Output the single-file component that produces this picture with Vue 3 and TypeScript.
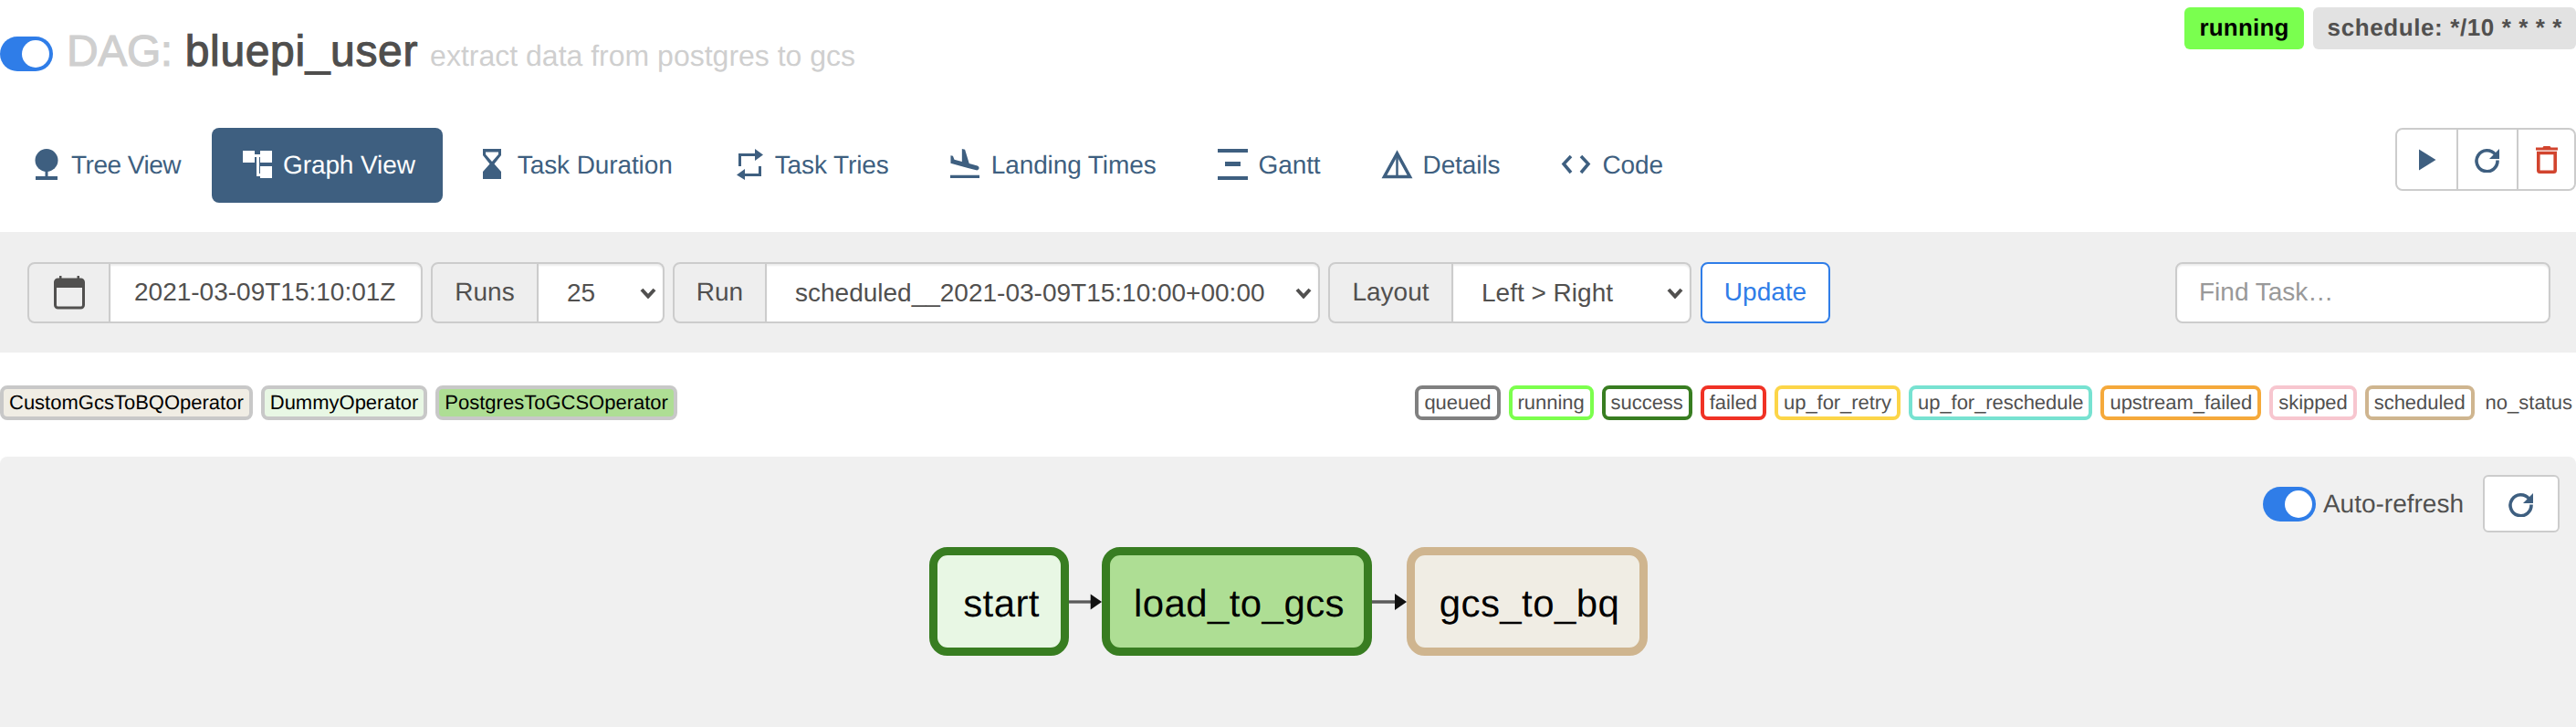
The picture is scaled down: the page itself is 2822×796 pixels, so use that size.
<script setup lang="ts">
// Airflow graph view page for one DAG
const navItems = [
  { key: 'tree', label: 'Tree View' },
  { key: 'graph', label: 'Graph View', active: true },
  { key: 'duration', label: 'Task Duration' },
  { key: 'tries', label: 'Task Tries' },
  { key: 'landing', label: 'Landing Times' },
  { key: 'gantt', label: 'Gantt' },
  { key: 'details', label: 'Details' },
  { key: 'code', label: 'Code' }
];

const operators = [
  { name: 'CustomGcsToBQOperator', color: '#f0ede4' },
  { name: 'DummyOperator', color: '#e8f7e4' },
  { name: 'PostgresToGCSOperator', color: '#aede94' }
];

const states = [
  { name: 'queued', color: '#808080' },
  { name: 'running', color: '#7cff4d' },
  { name: 'success', color: '#387d21' },
  { name: 'failed', color: '#f03225' },
  { name: 'up_for_retry', color: '#fcd548' },
  { name: 'up_for_reschedule', color: '#77e2d1' },
  { name: 'upstream_failed', color: '#f5a93b' },
  { name: 'skipped', color: '#f7c6cf' },
  { name: 'scheduled', color: '#cfb58f' }
];

const tasks = [
  { id: 'start', cls: 'node-start' },
  { id: 'load_to_gcs', cls: 'node-load' },
  { id: 'gcs_to_bq', cls: 'node-bq' }
];
</script>

<template>
  <div class="page">
    <header class="head">
      <h1 class="title">
        <span class="toggle"><span class="knob"></span></span>
        <span class="dag-label">DAG:</span>
        <span class="dag-name">bluepi_user</span>
        <small class="dag-desc">extract data from postgres to gcs</small>
      </h1>
      <div class="badges">
        <span class="badge badge-running">running</span>
        <span class="badge badge-schedule">schedule: */10 * * * *</span>
      </div>
    </header>

    <div class="nav-row">
      <nav class="nav">
        <a v-for="item in navItems" :key="item.key" class="nav-item" :class="{ active: item.active }">
          <svg class="nav-icon" width="40" height="40" viewBox="0 0 40 40">
            <g v-if="item.key === 'tree'" fill="currentColor">
              <circle cx="21" cy="14.5" r="12.5" />
              <rect x="19.5" y="26" width="3" height="7" />
              <rect x="9" y="32" width="24" height="4" />
            </g>
            <g v-else-if="item.key === 'graph'" fill="currentColor">
              <rect x="4" y="4" width="13" height="13" />
              <rect x="23" y="4" width="13" height="13" />
              <rect x="23" y="21" width="13" height="13" />
              <rect x="17" y="8" width="6" height="3" />
              <rect x="19" y="8" width="3" height="24" />
              <rect x="19" y="29" width="4" height="3" />
            </g>
            <path
              v-else-if="item.key === 'duration'"
              fill="currentColor"
              fill-rule="evenodd"
              d="M10 2H30V9L22.5 18.5 30 27V35H10V27L17.5 18.5 10 9ZM13 5.5V8L20 16 27 8V5.5Z"
            />
            <g v-else-if="item.key === 'tries'">
              <path d="M9.5 21V8.5H27M31.5 21V30.5H14" fill="none" stroke="currentColor" stroke-width="3" />
              <path d="M26 2 35 8.5 26 15ZM15 24 6 30.5 15 36Z" fill="currentColor" />
            </g>
            <path
              v-else-if="item.key === 'landing'"
              fill="currentColor"
              transform="translate(-1.2 -1.37) scale(1.684)"
              d="M2.5 19h19v2h-19v-2zm7.18-5.73l4.35 1.16 5.31 1.42c.8.21 1.62-.26 1.84-1.06.21-.8-.26-1.62-1.06-1.84l-5.31-1.42-2.76-9.02L10.12 2v8.28L5.15 8.95l-.93-2.32-1.45-.39v5.17l1.6.43 5.31 1.43z"
            />
            <g v-else-if="item.key === 'gantt'" fill="currentColor">
              <rect x="3" y="2" width="33" height="4" />
              <rect x="11" y="16" width="17" height="5" />
              <rect x="3" y="32" width="33" height="4" />
            </g>
            <g v-else-if="item.key === 'details'" fill="none" stroke="currentColor">
              <path d="M19.5 7 5.5 32.5H33.5Z" stroke-width="3.5" />
              <path d="M19.5 7V33" stroke-width="2.5" />
            </g>
            <path
              v-else
              d="M14 10 6 18.5 14 28M25 10 33 18.5 25 28"
              fill="none"
              stroke="currentColor"
              stroke-width="3.5"
            />
          </svg>
          <span>{{ item.label }}</span>
        </a>
      </nav>
      <div class="actions">
        <button class="action">
          <svg width="22" height="26" viewBox="0 0 22 26"><path d="M2 1.5 20.5 13 2 24.5Z" fill="#3e5f80" /></svg>
        </button>
        <button class="action">
          <svg width="28" height="28" viewBox="0 0 28 28">
            <path d="M22.5 8A11.5 11.5 0 1 0 25 14.5" fill="none" stroke="#3e5f80" stroke-width="3.6" />
            <path d="M27 2V13H16Z" fill="#3e5f80" />
          </svg>
        </button>
        <button class="action">
          <svg width="26" height="31" viewBox="0 0 26 31">
            <path d="M1 2.5H8.5L9.5 1H16.5L17.5 2.5H25V5.5H1Z" fill="#d2442e" />
            <path d="M3.8 8.5H22.2V27.5Q22.2 29.2 20.5 29.2H5.5Q3.8 29.2 3.8 27.5Z" fill="none" stroke="#d2442e" stroke-width="3.6" />
          </svg>
        </button>
      </div>
    </div>

    <form class="filters" @submit.prevent>
      <div class="group">
        <span class="addon addon-date">
          <svg width="36" height="38" viewBox="0 0 36 38">
            <rect x="2.5" y="5" width="31" height="31" rx="3" fill="none" stroke="#51504f" stroke-width="3" />
            <rect x="2" y="5" width="32" height="9" rx="2" fill="#51504f" />
            <rect x="7" y="1" width="2.5" height="6" fill="#51504f" />
            <rect x="26.5" y="1" width="2.5" height="6" fill="#51504f" />
          </svg>
        </span>
        <input class="control control-date" type="text" value="2021-03-09T15:10:01Z" />
      </div>
      <div class="group">
        <span class="addon addon-runs">Runs</span>
        <span class="select-wrap wrap-runs">
          <select class="control"><option>25</option></select>
          <svg class="chevron" width="18" height="12" viewBox="0 0 18 12"><path d="M2 2 9 9.5 16 2" fill="none" stroke="#51504f" stroke-width="4" /></svg>
        </span>
      </div>
      <div class="group">
        <span class="addon addon-run">Run</span>
        <span class="select-wrap wrap-run">
          <select class="control"><option>scheduled__2021-03-09T15:10:00+00:00</option></select>
          <svg class="chevron" width="18" height="12" viewBox="0 0 18 12"><path d="M2 2 9 9.5 16 2" fill="none" stroke="#51504f" stroke-width="4" /></svg>
        </span>
      </div>
      <div class="group">
        <span class="addon addon-layout">Layout</span>
        <span class="select-wrap wrap-layout">
          <select class="control"><option>Left &gt; Right</option></select>
          <svg class="chevron" width="18" height="12" viewBox="0 0 18 12"><path d="M2 2 9 9.5 16 2" fill="none" stroke="#51504f" stroke-width="4" /></svg>
        </span>
      </div>
      <button class="update">Update</button>
      <input class="find" type="text" placeholder="Find Task…" />
    </form>

    <div class="legend">
      <div class="legend-group">
        <span
          v-for="op in operators"
          :key="op.name"
          class="chip chip-op"
          :style="{ backgroundColor: op.color }"
        >{{ op.name }}</span>
      </div>
      <div class="legend-group">
        <span
          v-for="st in states"
          :key="st.name"
          class="chip chip-state"
          :style="{ borderColor: st.color }"
        >{{ st.name }}</span>
        <span class="no-status">no_status</span>
      </div>
    </div>

    <section class="graph">
      <div class="graph-tools">
        <span class="toggle"><span class="knob"></span></span>
        <span class="refresh-label">Auto-refresh</span>
        <button class="refresh-btn">
          <svg width="28" height="28" viewBox="0 0 28 28">
            <path d="M22.5 8A11.5 11.5 0 1 0 25 14.5" fill="none" stroke="#3e5f80" stroke-width="3.6" />
            <path d="M27 2V13H16Z" fill="#3e5f80" />
          </svg>
        </button>
      </div>
      <div class="dag">
        <template v-for="(task, i) in tasks" :key="task.id">
          <svg v-if="i > 0" class="edge" :width="i === 1 ? 36 : 38" height="24" viewBox="0 0 38 24" preserveAspectRatio="xMaxYMid meet">
            <path d="M0 12H28" stroke="#5a5a5a" stroke-width="3.5" />
            <path d="M25 3 38 12 25 21Z" fill="#111" />
          </svg>
          <div class="node" :class="task.cls">{{ task.id }}</div>
        </template>
      </div>
    </section>
  </div>
</template>

<style scoped>
.page {
  display: flex;
  flex-direction: column;
  height: 796px;
  overflow: hidden;
  font-family: 'Liberation Sans', Arial, sans-serif;
  font-size: 28px;
  text-rendering: geometricPrecision;
  color: #51504f;
  background: #fff;
}

.head {
  display: flex;
  justify-content: space-between;
  align-items: flex-start;
  height: 140px;
  box-sizing: border-box;
  padding-top: 8px;
}

.title {
  display: flex;
  align-items: baseline;
  margin: 21px 0 0;
  font-size: 48px;
  line-height: 56px;
  font-weight: normal;
}

.title .toggle {
  align-self: center;
  margin-right: 15px;
}

.toggle {
  display: flex;
  align-items: center;
  justify-content: flex-end;
  width: 58px;
  height: 38px;
  box-sizing: border-box;
  padding-right: 4px;
  border-radius: 19px;
  background: #2f7de8;
  flex: none;
}

.knob {
  width: 30px;
  height: 30px;
  border-radius: 50%;
  background: #fff;
}

.dag-label {
  letter-spacing: -0.4px;
  color: #cfcfcf;
  -webkit-text-stroke: 1.1px #cfcfcf;
}

.dag-name {
  margin-left: 14px;
  letter-spacing: 0.65px;
  color: #4f4e4d;
  -webkit-text-stroke: 1.1px #4f4e4d;
}

.dag-desc {
  margin-left: 13px;
  font-size: 32px;
  color: #cfcfcf;
}

.badges {
  display: flex;
  gap: 10px;
}

.badge {
  height: 46px;
  line-height: 45px;
  padding: 0 16px;
  border-radius: 6px;
  font-size: 26px;
  font-weight: bold;
}

.badge-running {
  background: #7aff4f;
  color: #000;
  letter-spacing: 0.2px;
}

.badge-schedule {
  background: #e2e2e2;
  padding-right: 15px;
  letter-spacing: 0.6px;
}

.nav-row {
  display: flex;
  justify-content: space-between;
  align-items: flex-start;
  height: 114px;
}

.nav {
  display: flex;
  gap: 4px;
}

.nav-item {
  display: flex;
  align-items: center;
  gap: 8px;
  height: 82px;
  padding: 0 30px;
  border-radius: 8px;
  color: #3e5f80;
  letter-spacing: -0.1px;
}

.nav-item:first-child {
  letter-spacing: -0.5px;
}

.nav-item.active {
  background: #3e5f80;
  color: #fff;
}

.nav-icon {
  flex: none;
}

.actions {
  display: flex;
  height: 69px;
  box-sizing: border-box;
  border: 2px solid #ccc;
  border-radius: 8px;
}

.action {
  display: flex;
  align-items: center;
  justify-content: center;
  box-sizing: border-box;
  width: 65px;
  padding: 0;
  border: none;
  background: #fff;
  border-radius: 8px;
}

.action + .action {
  width: 66px;
  border-left: 2px solid #ccc;
  border-radius: 0 8px 8px 0;
}

.action:last-child {
  width: 63px;
}

.filters {
  display: flex;
  align-items: center;
  gap: 9px;
  height: 132px;
  flex: none;
  padding: 0 28px 0 30px;
  background: #efefef;
}

.group {
  display: flex;
  height: 67px;
}

.addon {
  display: flex;
  align-items: center;
  justify-content: center;
  box-sizing: border-box;
  border: 2px solid #ccc;
  border-radius: 8px 0 0 8px;
  background: #eee;
}

.addon-date { width: 91px; }
.addon-runs { width: 118px; }
.addon-run { width: 103px; }
.addon-layout { width: 137px; }

.select-wrap {
  position: relative;
  display: block;
}

.wrap-runs { width: 138px; }
.wrap-run { width: 606px; }
.wrap-layout { width: 261px; }

.control {
  display: block;
  width: 100%;
  height: 67px;
  box-sizing: border-box;
  margin: 0;
  padding: 0 0 0 31px;
  border: 2px solid #ccc;
  border-left: none;
  border-radius: 0 8px 8px 0;
  background: #fff;
  color: #51504f;
  font: inherit;
  outline: none;
  appearance: none;
  box-shadow: inset 0 2px 2px rgba(0, 0, 0, 0.075);
}

.control-date {
  width: 342px;
  padding-left: 26px;
}

.chevron {
  position: absolute;
  top: 28px;
  right: 9px;
  pointer-events: none;
}

.update {
  height: 67px;
  width: 142px;
  margin-left: 1px;
  padding: 0;
  border: 2px solid #2f7de8;
  border-radius: 8px;
  background: #fff;
  color: #2f7de8;
  font: inherit;
}

.find {
  width: 411px;
  height: 67px;
  box-sizing: border-box;
  margin-left: auto;
  padding: 0 24px;
  border: 2px solid #ccc;
  border-radius: 8px;
  background: #fff;
  color: #51504f;
  font: inherit;
  outline: none;
  box-shadow: inset 0 2px 2px rgba(0, 0, 0, 0.075);
}

.find::placeholder {
  color: #999;
  opacity: 1;
}

.legend {
  display: flex;
  justify-content: space-between;
  align-items: flex-start;
  height: 114px;
  flex: none;
  box-sizing: border-box;
  padding-top: 36px;
}

.legend-group {
  display: flex;
  gap: 9px;
}

.chip {
  height: 38px;
  box-sizing: border-box;
  padding: 0 6px;
  border: 4px solid #c8c8c8;
  border-radius: 8px;
  font-size: 22px;
  line-height: 30px;
  white-space: nowrap;
}

.chip-op {
  color: #000;
}

.chip-state {
  background: #fff;
  letter-spacing: -0.05px;
}

.no-status {
  margin-left: 3px;
  padding-right: 4px;
  font-size: 22px;
  line-height: 38px;
}

.graph {
  flex: 1;
  min-height: 0;
  border-radius: 8px 8px 0 0;
  background: #f0f0f0;
}

.graph-tools {
  display: flex;
  justify-content: flex-end;
  align-items: center;
  padding: 20px 18px 0 0;
}

.refresh-label {
  margin: 0 21px 0 8px;
}

.refresh-btn {
  display: flex;
  align-items: center;
  justify-content: center;
  width: 84px;
  height: 63px;
  padding: 0;
  border: 2px solid #ccc;
  border-radius: 6px;
  background: #fff;
}

.dag {
  display: flex;
  align-items: center;
  margin: 16px 0 0 1018px;
}

.node {
  display: flex;
  align-items: center;
  justify-content: center;
  height: 119px;
  box-sizing: border-box;
  padding: 4px 0 0 5px;
  border: 9px solid #387d21;
  border-radius: 20px;
  color: #000;
  font-size: 42px;
  letter-spacing: 0.4px;
}

.node-start {
  width: 153px;
  background: #e8f7e4;
}

.node-load {
  width: 296px;
  background: #aede94;
}

.node-bq {
  width: 264px;
  background: #f0ede4;
  border-color: #cfb58f;
}

.edge {
  flex: none;
}
</style>
